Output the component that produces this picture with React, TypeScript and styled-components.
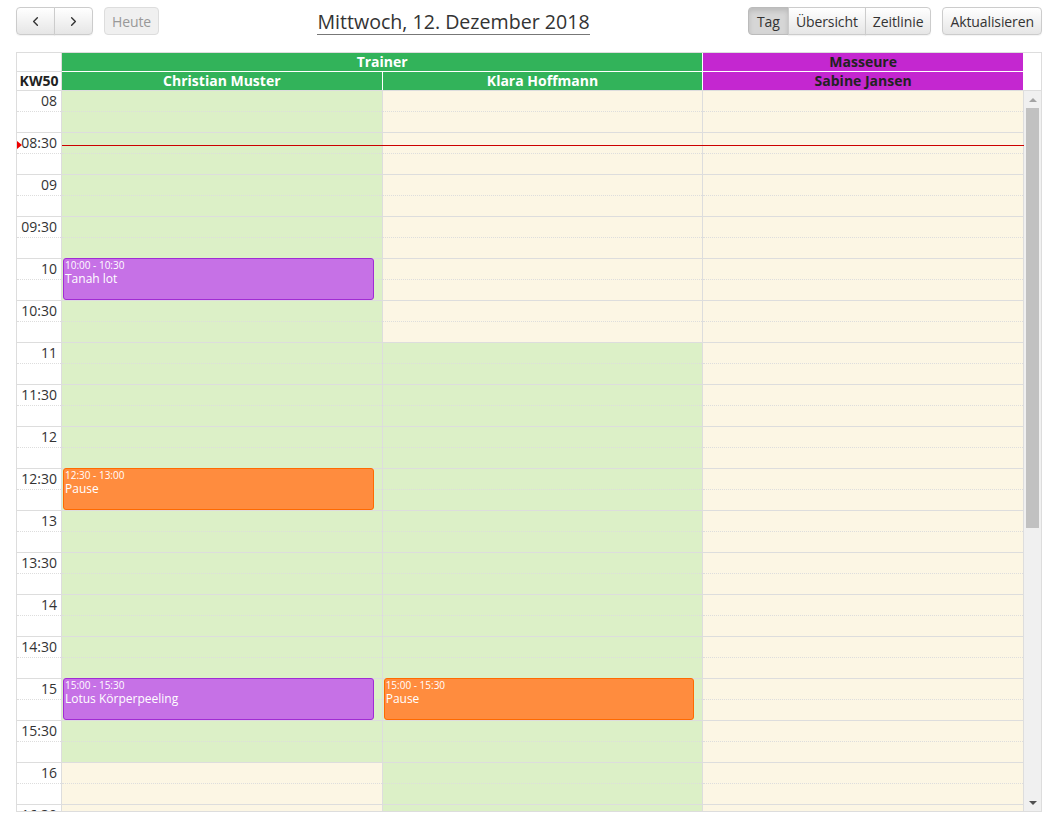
import React from 'react';
import styled, { createGlobalStyle, css } from 'styled-components';
import { ChevronLeft, ChevronRight } from 'lucide-react';

const GlobalStyle = createGlobalStyle`
  body {
    margin: 0;
    background: #fff;
    color: #333;
    font-family: "Open Sans", "DejaVu Sans", sans-serif;
    font-size: 14px;
  }
`;

const SLOT = 21;
const HALF_HOURS = 28;
const START_HOUR = 8;

type Kind = 'booking' | 'pause';

interface IResource {
  name: string;
  open: [number, number];
}

interface IEvent {
  col: number;
  start: number;
  time: string;
  title: string;
  kind: Kind;
}

const resources: IResource[] = [
  { name: 'Christian Muster', open: [0, 16] },
  { name: 'Klara Hoffmann', open: [6, 22] },
  { name: 'Sabine Jansen', open: [0, 0] },
];

const events: IEvent[] = [
  { col: 0, start: 4, time: '10:00 - 10:30', title: 'Tanah lot', kind: 'booking' },
  { col: 0, start: 9, time: '12:30 - 13:00', title: 'Pause', kind: 'pause' },
  { col: 0, start: 14, time: '15:00 - 15:30', title: 'Lotus Körperpeeling', kind: 'booking' },
  { col: 1, start: 14, time: '15:00 - 15:30', title: 'Pause', kind: 'pause' },
];

const label = (i: number) => {
  const h = String(START_HOUR + Math.floor(i / 2)).padStart(2, '0');
  return i % 2 ? `${h}:30` : h;
};

const App = () => {
  const halves = Array.from({ length: HALF_HOURS }, (_, i) => i);
  return (
    <>
      <GlobalStyle />
      <Page>
        <Toolbar>
          <Left>
            <ButtonGroup>
              <Button>
                <ChevronLeft size={15} strokeWidth={2.2} />
              </Button>
              <Button>
                <ChevronRight size={15} strokeWidth={2.2} />
              </Button>
            </ButtonGroup>
            <Button $disabled>Heute</Button>
          </Left>
          <Title>Mittwoch, 12. Dezember 2018</Title>
          <Right>
            <ButtonGroup>
              <Button $active>Tag</Button>
              <Button>Übersicht</Button>
              <Button>Zeitlinie</Button>
            </ButtonGroup>
            <Button>Aktualisieren</Button>
          </Right>
        </Toolbar>

        <Calendar>
          <HeaderGrid>
            <AxisHead />
            <GroupHead $bg="#32b35a" $fg="#fff" $span={2}>
              Trainer
            </GroupHead>
            <GroupHead $bg="#c427d0" $fg="#222" $span={1}>
              Masseure
            </GroupHead>
            <Gutter />
            <AxisHead $bottom>KW50</AxisHead>
            {resources.map((r, i) => (
              <GroupHead
                key={r.name}
                $bg={i < 2 ? '#32b35a' : '#c427d0'}
                $fg={i < 2 ? '#fff' : '#222'}
                $span={1}
                $bottom
              >
                {r.name}
              </GroupHead>
            ))}
          </HeaderGrid>

          <BodyRow>
            <Viewport>
              <BodyGrid>
                <AxisColumn>
                  {halves.map((i) => (
                    <React.Fragment key={i}>
                      <Slot $solid={false}>
                        <AxisLabel>{label(i)}</AxisLabel>
                      </Slot>
                      <Slot $solid />
                    </React.Fragment>
                  ))}
                </AxisColumn>
                {resources.map((r, c) => (
                  <DayColumn key={r.name}>
                    {halves.map((i) => {
                      const open = i >= r.open[0] && i < r.open[1];
                      return (
                        <React.Fragment key={i}>
                          <Slot $open={open} $solid={false} />
                          <Slot $open={open} $solid />
                        </React.Fragment>
                      );
                    })}
                    {events
                      .filter((e) => e.col === c)
                      .map((e) => (
                        <EventBox
                          key={e.time + e.title}
                          $kind={e.kind}
                          style={{ top: e.start * SLOT * 2 - 1 }}
                        >
                          <EventTime>{e.time}</EventTime>
                          <EventTitle>{e.title}</EventTitle>
                        </EventBox>
                      ))}
                  </DayColumn>
                ))}
                <NowLine style={{ top: 54 }}>
                  <NowArrow />
                </NowLine>
              </BodyGrid>
            </Viewport>
            <ScrollBar>
              <ScrollButton>
                <Arrow $up />
              </ScrollButton>
              <ScrollTrack>
                <ScrollThumb />
              </ScrollTrack>
              <ScrollButton>
                <Arrow />
              </ScrollButton>
            </ScrollBar>
          </BodyRow>
        </Calendar>
      </Page>
    </>
  );
};

export default App;

const Page = styled.div`
  width: 1026px;
  padding: 7px 0 0 16px;
`;

const Toolbar = styled.div`
  display: flex;
  align-items: center;
  justify-content: space-between;
  height: 28px;
  margin-bottom: 17px;
`;

const Left = styled.div`
  display: flex;
  gap: 11px;
`;

const Right = styled(Left)``;

const ButtonGroup = styled.div`
  display: flex;

  & > button {
    border-radius: 0;
  }
  & > button + button {
    margin-left: -1px;
  }
  & > button:first-child {
    border-radius: 4px 0 0 4px;
  }
  & > button:last-child {
    border-radius: 0 4px 4px 0;
  }
`;

const Button = styled.button<{ $active?: boolean; $disabled?: boolean }>`
  display: flex;
  align-items: center;
  justify-content: center;
  box-sizing: border-box;
  height: 28px;
  min-width: 39px;
  padding: 0 7px;
  border: 1px solid #ccc;
  border-radius: 4px;
  background: linear-gradient(#fff, #e6e6e6);
  box-shadow: 0 1px 1px rgba(0, 0, 0, 0.05);
  color: #333;
  font-family: inherit;
  font-size: 14px;
  letter-spacing: -0.1px;
  cursor: pointer;

  ${({ $active }) =>
    $active &&
    css`
      min-width: 41px;
      background: #d6d6d6;
      border-color: #bbb;
      box-shadow: inset 0 3px 5px rgba(0, 0, 0, 0.125);
    `}

  ${({ $disabled }) =>
    $disabled &&
    css`
      background: #f0f0f0;
      border-color: #ddd;
      color: #999;
      box-shadow: none;
    `}
`;

const Title = styled.h2`
  margin: 2px 0 0;
  border-bottom: 1px solid #777;
  color: #333;
  font-size: 19.6px;
  font-weight: 400;
  line-height: 25px;
`;

const Calendar = styled.div`
  width: 1026px;
  box-sizing: border-box;
  border: 1px solid #ddd;
`;

const HeaderGrid = styled.div`
  display: grid;
  grid-template-columns: 45px repeat(3, 1fr) 17px;
  border-bottom: 1px solid #ddd;
`;

const AxisHead = styled.div<{ $bottom?: boolean }>`
  box-sizing: border-box;
  height: ${({ $bottom }) => ($bottom ? '18px' : '19px')};
  border-right: 1px solid #ddd;
  border-bottom: ${({ $bottom }) => ($bottom ? 'none' : '1px solid #ddd')};
  color: #222;
  font-size: 14px;
  font-weight: 700;
  line-height: 18px;
  text-align: center;
`;

const GroupHead = styled.div<{ $bg: string; $fg: string; $span: number; $bottom?: boolean }>`
  grid-column: span ${({ $span }) => $span};
  box-sizing: border-box;
  height: ${({ $bottom }) => ($bottom ? '18px' : '19px')};
  border-right: 1px solid #fff;
  border-bottom: ${({ $bottom }) => ($bottom ? 'none' : '1px solid #fff')};
  background: ${({ $bg }) => $bg};
  color: ${({ $fg }) => $fg};
  font-size: 14px;
  font-weight: 700;
  line-height: 18px;
  text-align: center;
  white-space: nowrap;
`;

const Gutter = styled.div`
  grid-row: span 2;
  background: #fff;
`;

const BodyRow = styled.div`
  display: flex;
  height: 720px;
`;

const Viewport = styled.div`
  flex: 1;
  min-width: 0;
  overflow: hidden;
`;

const ScrollBar = styled.div`
  display: flex;
  flex-direction: column;
  width: 17px;
  background: #f0f0f0;
`;

const ScrollButton = styled.div`
  display: flex;
  align-items: center;
  justify-content: center;
  height: 17px;
`;

const Arrow = styled.div<{ $up?: boolean }>`
  width: 0;
  height: 0;
  border-left: 4px solid transparent;
  border-right: 4px solid transparent;
  ${({ $up }) =>
    $up
      ? css`
          border-bottom: 4px solid #a3a3a3;
        `
      : css`
          border-top: 4px solid #505050;
        `}
`;

const ScrollTrack = styled.div`
  flex: 1;
  padding: 0 2px;
`;

const ScrollThumb = styled.div`
  height: 420px;
  background: #c1c1c1;
`;

const BodyGrid = styled.div`
  position: relative;
  display: grid;
  grid-template-columns: 45px repeat(3, 1fr);
`;

const AxisColumn = styled.div`
  display: flex;
  flex-direction: column;
  border-right: 1px solid #ddd;
  background: #fff;
`;

const DayColumn = styled.div`
  position: relative;
  display: flex;
  flex-direction: column;
  border-right: 1px solid #ddd;
`;

const Slot = styled.div<{ $open?: boolean; $solid: boolean }>`
  box-sizing: border-box;
  height: ${SLOT}px;
  border-bottom: 1px ${({ $solid }) => ($solid ? 'solid' : 'dotted')} #ddd;
  background: ${({ $open }) =>
    $open === undefined ? 'transparent' : $open ? '#dcf0c7' : '#fcf6e4'};
`;

const AxisLabel = styled.div`
  padding-right: 4px;
  color: #333;
  font-size: 14px;
  line-height: 20px;
  text-align: right;
`;

const EventBox = styled.div<{ $kind: Kind }>`
  position: absolute;
  left: 1px;
  right: 8px;
  box-sizing: border-box;
  height: 42px;
  padding: 0 1px;
  border: 1px solid;
  border-radius: 3px;
  color: #fff;
  overflow: hidden;
  z-index: 2;

  ${({ $kind }) =>
    $kind === 'booking'
      ? css`
          background: #c671e6;
          border-color: #a12cd4;
        `
      : css`
          background: #ff8c3e;
          border-color: #ff6a00;
        `}
`;

const EventTime = styled.div`
  font-size: 10px;
  line-height: 12px;
`;

const EventTitle = styled.div`
  font-size: 12px;
  line-height: 16px;
`;

const NowLine = styled.div`
  position: absolute;
  left: 45px;
  right: 0;
  height: 1px;
  background: #c00;
  z-index: 3;
`;

const NowArrow = styled.div`
  position: absolute;
  left: -45px;
  top: -4px;
  width: 0;
  height: 0;
  border-top: 4px solid transparent;
  border-bottom: 4px solid transparent;
  border-left: 5px solid #e00;
`;
